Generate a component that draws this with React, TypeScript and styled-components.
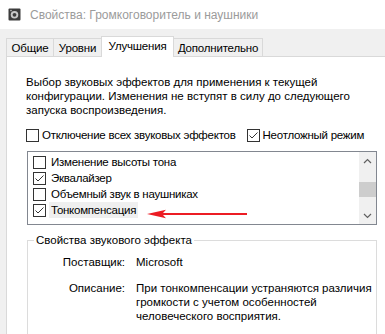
import styled, { createGlobalStyle } from 'styled-components'

const GlobalStyle = createGlobalStyle`
  html, body {
    margin: 0;
    padding: 0;
  }
  body {
    font-family: 'Liberation Sans', Arial, sans-serif;
    font-size: 11.5px;
    color: #000;
  }
`

const Window = styled.div`
  width: 385px;
  height: 334px;
  overflow: hidden;
  background: #f0f0f0;
  display: flex;
  flex-direction: column;
`

const TitleBar = styled.div`
  flex: none;
  height: 29px;
  background: #fff;
  display: flex;
  align-items: center;
  gap: 9px;
  padding-left: 8px;
  color: #9b9b9b;
  font-size: 12px;
`

const TabStrip = styled.div`
  flex: none;
  height: 27px;
  display: flex;
  align-items: flex-end;
  padding-left: 6px;
  box-sizing: border-box;
`

const Tab = styled.div<{ $w: number; $active?: boolean }>`
  box-sizing: border-box;
  width: ${(p) => p.$w}px;
  height: ${(p) => (p.$active ? 21 : 18)}px;
  margin-left: -1px;
  margin-bottom: ${(p) => (p.$active ? -1 : 0)}px;
  border: 1px solid #d9d9d9;
  border-bottom: none;
  background: ${(p) => (p.$active ? '#fff' : '#f0f0f0')};
  position: relative;
  z-index: ${(p) => (p.$active ? 1 : 0)};
  display: flex;
  justify-content: center;
  align-items: ${(p) => (p.$active ? 'flex-start' : 'center')};
  padding-top: ${(p) => (p.$active ? 2 : 0)}px;
  line-height: 14px;
  letter-spacing: -0.2px;
  white-space: nowrap;

  &:first-child {
    margin-left: 0;
  }
`

const Panel = styled.div`
  flex: 1;
  width: 400px;
  margin-left: 6px;
  background: #fff;
  border: 1px solid #d9d9d9;
  padding: 18px 0 0 19px;
  box-sizing: border-box;
`

const Intro = styled.p`
  margin: 0;
  line-height: 14px;
  white-space: nowrap;
`

const OptionsRow = styled.div`
  display: flex;
  align-items: center;
  gap: 11px;
  margin-top: 11px;
  line-height: 14px;
  letter-spacing: -0.25px;
`

const CheckLabel = styled.label`
  display: flex;
  align-items: center;
  gap: 3px;
  white-space: nowrap;
`

const Box = styled.span`
  box-sizing: border-box;
  width: 13px;
  height: 13px;
  flex: none;
  border: 1px solid #333;
  background: #fff;
  display: flex;
  align-items: center;
  justify-content: center;
`

const ListBox = styled.div`
  position: relative;
  box-sizing: border-box;
  width: 350px;
  height: 74px;
  margin: 9px 0 0 1px;
  border: 1px solid #828790;
  display: flex;
`

const Items = styled.div`
  flex: 1;
  padding: 2px 0 0 5px;
  letter-spacing: -0.25px;
`

const Item = styled.div`
  height: 16px;
  display: flex;
  align-items: center;
  gap: 3px;
`

const ItemText = styled.span<{ $selected?: boolean }>`
  padding: 0 2px;
  line-height: 16px;
  background: ${(p) => (p.$selected ? '#efefef' : 'transparent')};
  white-space: nowrap;
`

const ScrollBar = styled.div`
  width: 17px;
  flex: none;
  background: #f0f0f0;
  display: flex;
  flex-direction: column;
  align-items: center;
`

const ScrollBtn = styled.div`
  height: 17px;
  width: 100%;
  display: flex;
  align-items: center;
  justify-content: center;
`

const Track = styled.div`
  flex: 1;
  width: 100%;
  padding-top: 13px;
  box-sizing: border-box;
`

const Thumb = styled.div`
  height: 15px;
  background: #cdcdcd;
`

const Arrow = styled.svg`
  position: absolute;
  left: 119px;
  top: 57px;
`

const Group = styled.fieldset`
  box-sizing: border-box;
  width: 350px;
  margin: 8px 0 0 1px;
  padding: 8px 0 20px;
  border: 1px solid #dcdcdc;
  min-width: 0;
`

const Legend = styled.legend`
  margin-left: 6px;
  padding: 0 2px;
  line-height: 14px;
`

const Props = styled.div`
  display: grid;
  grid-template-columns: 97px 1fr;
  column-gap: 11px;
  row-gap: 12px;
  line-height: 14px;
`

const PropName = styled.div`
  text-align: right;
`

const PropValue = styled.div`
  white-space: nowrap;
`

function Check({ checked }: { checked?: boolean }) {
  return (
    <Box>
      {checked && (
        <svg width="11" height="11" viewBox="0 0 11 11">
          <polyline points="1.5,5.5 4,8 9.5,2.5" fill="none" stroke="#333" strokeWidth="1" />
        </svg>
      )}
    </Box>
  )
}

function SpeakerIcon() {
  return (
    <svg width="13" height="13" viewBox="0 0 13 13">
      <rect x="0.5" y="0.5" width="12" height="12" rx="1" fill="#3c3c3c" />
      <circle cx="6.5" cy="6.8" r="3.8" fill="#c8c8c8" />
      <circle cx="6.5" cy="6.8" r="1.9" fill="#3c3c3c" />
      <circle cx="3" cy="2.6" r="0.8" fill="#c8c8c8" />
    </svg>
  )
}

const effects = [
  { name: 'Изменение высоты тона', checked: false },
  { name: 'Эквалайзер', checked: true },
  { name: 'Объемный звук в наушниках', checked: false },
  { name: 'Тонкомпенсация', checked: true, selected: true },
]

export default function App() {
  return (
    <Window>
      <GlobalStyle />
      <TitleBar>
        <SpeakerIcon />
        <span>Свойства: Громкоговоритель и наушники</span>
      </TitleBar>
      <TabStrip>
        <Tab $w={48}>Общие</Tab>
        <Tab $w={49}>Уровни</Tab>
        <Tab $w={73} $active>
          Улучшения
        </Tab>
        <Tab $w={90}>Дополнительно</Tab>
      </TabStrip>
      <Panel>
        <Intro>
          Выбор звуковых эффектов для применения к текущей
          <br />
          конфигурации. Изменения не вступят в силу до следующего
          <br />
          запуска воспроизведения.
        </Intro>
        <OptionsRow>
          <CheckLabel>
            <Check />
            Отключение всех звуковых эффектов
          </CheckLabel>
          <CheckLabel>
            <Check checked />
            Неотложный режим
          </CheckLabel>
        </OptionsRow>
        <ListBox>
          <Items>
            {effects.map((e) => (
              <Item key={e.name}>
                <Check checked={e.checked} />
                <ItemText $selected={e.selected}>{e.name}</ItemText>
              </Item>
            ))}
          </Items>
          <ScrollBar>
            <ScrollBtn>
              <svg width="9" height="6" viewBox="0 0 9 6">
                <polyline points="1,5 4.5,1.5 8,5" fill="none" stroke="#606060" strokeWidth="1.2" />
              </svg>
            </ScrollBtn>
            <Track>
              <Thumb />
            </Track>
            <ScrollBtn>
              <svg width="9" height="6" viewBox="0 0 9 6">
                <polyline points="1,1 4.5,4.5 8,1" fill="none" stroke="#606060" strokeWidth="1.2" />
              </svg>
            </ScrollBtn>
          </ScrollBar>
          <Arrow width="100" height="10" viewBox="0 0 100 10">
            <polygon
              points="0,5 19,0.8 16,3.9 100,3.9 100,6.1 16,6.1 19,9.2"
              fill="#ec1c24"
            />
          </Arrow>
        </ListBox>
        <Group>
          <Legend>Свойства звукового эффекта</Legend>
          <Props>
            <PropName>Поставщик:</PropName>
            <PropValue>Microsoft</PropValue>
            <PropName>Описание:</PropName>
            <PropValue>
              При тонкомпенсации устраняются различия
              <br />
              громкости с учетом особенностей
              <br />
              человеческого восприятия.
            </PropValue>
          </Props>
        </Group>
      </Panel>
    </Window>
  )
}
